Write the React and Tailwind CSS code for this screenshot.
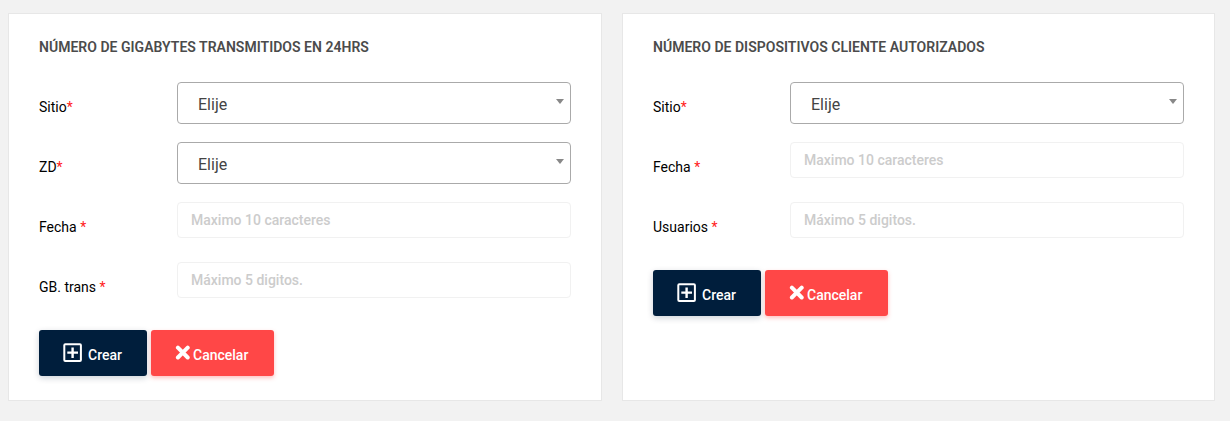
import React from "react";

function SelectBox() {
  return (
    <div className="flex h-[42px] w-full items-center justify-between rounded-[4px] border border-[#aaaaaa] bg-white pr-[6px] pl-[20px]">
      <span className="pt-[3px] text-[16px] leading-6 text-[#444444]">Elije</span>
      <svg className="mb-[3px] h-[5px] w-2" viewBox="0 0 8 5" fill="#888888">
        <path d="M0 0h8L4 5z" />
      </svg>
    </div>
  );
}

function Field({ label, placeholder, labelWidth }) {
  return (
    <div className="flex h-[60px] items-start">
      <label className={`${labelWidth} shrink-0 pt-[15px] text-[14px] leading-5 text-black`}>
        {label}
        <span className="text-[#ff2020]">*</span>
      </label>
      <div className="min-w-0 flex-1">
        {placeholder ? (
          <input
            className="block h-9 w-full rounded-[4px] border border-[#f1f1f1] bg-white px-[13px] text-[14px] font-medium text-[#444444] outline-none placeholder:text-[#cccccc]"
            placeholder={placeholder}
          />
        ) : (
          <SelectBox />
        )}
      </div>
    </div>
  );
}

function Actions() {
  return (
    <div className="mt-[8px] flex gap-1 text-[14px] font-medium text-white">
      <button className="flex h-[46px] w-[108px] rounded-[3px] bg-[#001e3c] pl-6 shadow-[0_2px_6px_rgba(0,30,60,0.2)]">
        <svg className="mt-[13px] h-5 w-5" viewBox="0 0 20 20" fill="none" stroke="white" strokeWidth="2">
          <rect x="1.3" y="1.3" width="16.6" height="16.6" rx="1" />
          <path d="M9.6 4.4v10.6M4.3 9.6H15" strokeWidth="2.4" />
        </svg>
        <span className="mt-[15px] ml-[5px] leading-5">Crear</span>
      </button>
      <button className="flex h-[46px] w-[123px] rounded-[3px] bg-[#ff4747] pl-[24px] shadow-[0_2px_4px_rgba(255,71,71,0.35)]">
        <svg className="mt-[15px] h-4 w-4" viewBox="0 0 16 16" fill="none" stroke="white" strokeWidth="4" strokeLinecap="round">
          <path d="M2.9 2.7l9.8 9.8M12.7 2.7l-9.8 9.8" />
        </svg>
        <span className="mt-[15px] ml-[2px] leading-5">Cancelar</span>
      </button>
    </div>
  );
}

function Card({ title, fields, labelWidth }) {
  return (
    <section className="h-[388px] border border-[#e7e7e7] bg-white px-[30px] pt-[23px]">
      <h4 className="mb-[25px] text-[14px] leading-5 font-semibold tracking-[0.02px] text-[#4b4b4b] uppercase">{title}</h4>
      {fields.map((field) => (
        <Field key={field.label} labelWidth={labelWidth} {...field} />
      ))}
      <Actions />
    </section>
  );
}

export default function App() {
  return (
    <main className="grid h-[421px] grid-cols-[594px_593px] gap-5 bg-[#f2f2f2] pt-[13px] pl-2 font-['Roboto',sans-serif]">
      <Card
        title="Número de gigabytes transmitidos en 24hrs"
        labelWidth="w-[138px]"
        fields={[
          { label: "Sitio" },
          { label: "ZD" },
          { label: "Fecha ", placeholder: "Maximo 10 caracteres" },
          { label: "GB. trans ", placeholder: "Máximo 5 digitos." },
        ]}
      />
      <Card
        title="Número de dispositivos cliente autorizados"
        labelWidth="w-[137px]"
        fields={[
          { label: "Sitio" },
          { label: "Fecha ", placeholder: "Maximo 10 caracteres" },
          { label: "Usuarios ", placeholder: "Máximo 5 digitos." },
        ]}
      />
    </main>
  );
}
